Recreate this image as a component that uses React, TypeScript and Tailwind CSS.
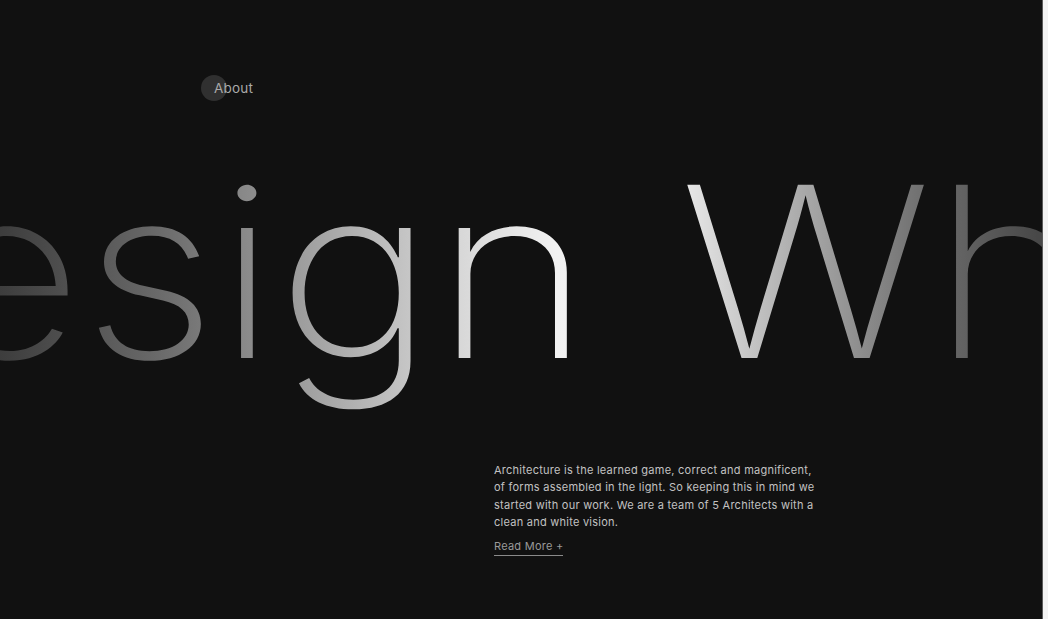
export default function App() {
  return (
    <div className="flex h-[619px] w-full overflow-hidden bg-[#f3f3f3] font-['Inter',sans-serif]">
      <main className="relative flex-1 overflow-hidden bg-[#111111]">
        <div className="pl-[201px] pt-[75px]">
          <a href="#" className="relative inline-flex h-[26px] items-center text-[13.5px] text-[#a9a9a9]">
            <span className="absolute left-0 top-0 h-[26px] w-[26px] rounded-full bg-[#303030]" />
            <span className="relative pl-[13px] tracking-[0.2px]">About</span>
          </a>
        </div>

        {/* headline is wider than the viewport on purpose; stretched a bit to get the wide geometric look */}
        <h1 className="mt-[16px] -ml-[262px] w-[1250px] origin-left scale-x-[1.12] whitespace-nowrap bg-[linear-gradient(to_right,#3c3c3c_231px,#666666_365px,#9c9c9c_499px,#d4d4d4_633px,#f2f2f2_731px,#ececec_838px,#acacac_946px,#727272_1053px,#484848_1160px)] bg-clip-text text-[238px] font-[200] leading-[1.3] text-transparent [word-spacing:12px]">
          Design What
        </h1>

        <div className="ml-[494px] mt-[35px] text-[11px] leading-[17.5px] tracking-[0.25px] text-[#c2c2c2]">
          <p>
            Architecture is the learned game, correct and magnificent,
            <br />
            of forms assembled in the light. So keeping this in mind we
            <br />
            started with our work. We are a team of 5 Architects with a
            <br />
            clean and white vision.
          </p>
          <a href="#" className="mt-[7px] inline-block border-b border-[#8a8a8a] pb-[2px] text-[11px] leading-[14px] text-[#9a9a9a]">
            Read More +
          </a>
        </div>
      </main>
      <div className="w-[6px] border-l border-[#5a5a5a] bg-[#f3f3f3]" />
    </div>
  )
}
